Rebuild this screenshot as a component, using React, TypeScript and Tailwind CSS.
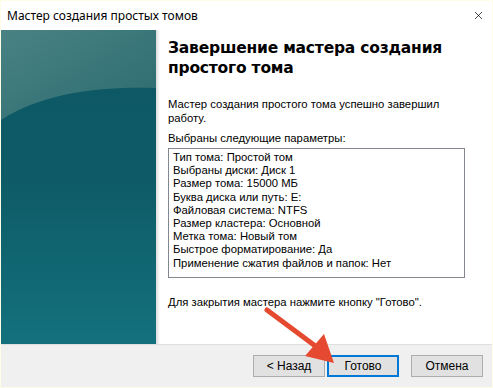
import { X } from "lucide-react";

const params = [
  "Тип тома: Простой том",
  "Выбраны диски: Диск 1",
  "Размер тома: 15000 МБ",
  "Буква диска или путь: E:",
  "Файловая система: NTFS",
  "Размер кластера: Основной",
  "Метка тома: Новый том",
  "Быстрое форматирование: Да",
  "Применение сжатия файлов и папок: Нет",
];

export default function App() {
  return (
    <div className="relative w-[493px] h-[388px] bg-[#fffde8] p-px overflow-hidden font-['Liberation_Sans',Arial,sans-serif] text-black">
      <div className="flex flex-col w-full h-full bg-white">
        {/* title bar */}
        <div className="flex items-center justify-between h-[29px] pl-[6px] pr-[6px] shrink-0">
          <span className="text-[12px] font-['Noto_Sans',sans-serif]">Мастер создания простых томов</span>
          <X className="w-[13px] h-[13px] mr-[1px]" strokeWidth={1.3} />
        </div>

        <div className="flex flex-1 min-h-0">
          {/* left image panel */}
          <div className="relative w-[155px] shrink-0 bg-gradient-to-b from-[#0d5663] via-[#0e5c68] to-[#13717d] overflow-hidden">
            <svg className="absolute inset-0" width="155" height="320" viewBox="0 0 155 320">
              <defs>
                <linearGradient id="top" x1="0" y1="0" x2="1" y2="1">
                  <stop offset="0" stopColor="#4a8283" />
                  <stop offset="1" stopColor="#2b6b70" />
                </linearGradient>
              </defs>
              <path d="M0 0 H155 V58 C95 56 40 64 0 90 Z" fill="url(#top)" />
            </svg>
          </div>
          <div className="w-[4px] shrink-0 bg-gradient-to-r from-[#dcdcdc] to-white" />

          {/* content */}
          <div className="flex-1 pl-[8px] pr-[8px] pt-[8px] text-[11.3px] leading-[14px]">
            <h1 className="font-['DejaVu_Sans',Verdana,sans-serif] font-bold text-[15.5px] leading-[20px] tracking-[-0.2px]">
              Завершение мастера создания простого тома
            </h1>
            <p className="mt-[19px] max-w-[285px]">Мастер создания простого тома успешно завершил работу.</p>
            <p className="mt-[6px]">Выбраны следующие параметры:</p>
            <div className="mt-[3px] w-[297px] h-[130px] border border-[#828790] pl-[4px] pt-[2px] leading-[13.2px]">
              {params.map((p) => (
                <div key={p}>{p}</div>
              ))}
            </div>
            <p className="mt-[17px]">Для закрытия мастера нажмите кнопку "Готово".</p>
          </div>
        </div>

        {/* bottom bar */}
        <div className="h-[43px] shrink-0 border-t border-[#dfdfdf] bg-[#f0f0f0] flex items-center justify-end pr-[9px] text-[12px]">
          <button className="w-[72px] h-[22px] border border-[#adadad] bg-[#e1e1e1]">&lt; Назад</button>
          <button className="w-[72px] h-[22px] ml-[2px] border-2 border-[#0078d7] bg-[#e1e1e1]">Готово</button>
          <button className="w-[72px] h-[22px] ml-[12px] border border-[#adadad] bg-[#e1e1e1]">Отмена</button>
        </div>
      </div>

      {/* annotation arrow */}
      <svg className="absolute left-0 top-0 pointer-events-none" width="493" height="388">
        <line x1="267" y1="310" x2="318" y2="348" stroke="#e5492f" strokeWidth="5" strokeLinecap="round" />
        <polygon points="334,363 305,356 324,334" fill="#e5492f" />
      </svg>
    </div>
  );
}
